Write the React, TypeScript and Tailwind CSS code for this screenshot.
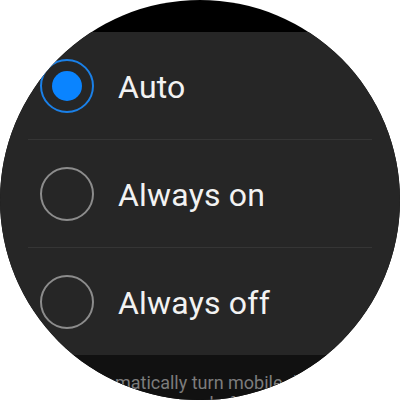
const options = [
  { id: 'auto', label: 'Auto' },
  { id: 'on', label: 'Always on' },
  { id: 'off', label: 'Always off' },
];

function Radio({ checked }: { checked: boolean }) {
  if (checked) {
    return (
      <div className="w-[54px] h-[54px] rounded-full border-2 border-[#1a80e8] flex items-center justify-center shrink-0">
        <div className="w-[30px] h-[30px] rounded-full bg-[#0a84ff]" />
      </div>
    );
  }
  return <div className="w-[54px] h-[54px] rounded-full border-2 border-[#8c8c8c] shrink-0" />;
}

export default function App() {
  const selected = 'auto';
  return (
    <div className="w-[400px] h-[400px] bg-white" style={{ fontFamily: 'Roboto, "Noto Sans", sans-serif' }}>
      <div className="w-[400px] h-[400px] rounded-full overflow-hidden bg-black flex flex-col">
        <div className="h-[32px] shrink-0" />
        <div className="bg-[#262626] shrink-0 flex flex-col">
          {options.map((opt, i) => (
            <div key={opt.id}>
              {i > 0 && <div className="mx-[28px] h-px bg-[#353535]" />}
              <div className="h-[107px] flex items-center pl-[40px] gap-[24px]">
                <Radio checked={opt.id === selected} />
                <span className="text-[32px] leading-none text-[#f2f2f2] tracking-[0.2px] pt-[2px]">{opt.label}</span>
              </div>
            </div>
          ))}
        </div>
        <div className="flex-1 bg-[#111111] pt-[17px] text-center text-[18px] leading-[21px] text-[#7c7c7c]">
          Automatically turn mobile data
          <br />
          on and off
        </div>
      </div>
    </div>
  );
}
